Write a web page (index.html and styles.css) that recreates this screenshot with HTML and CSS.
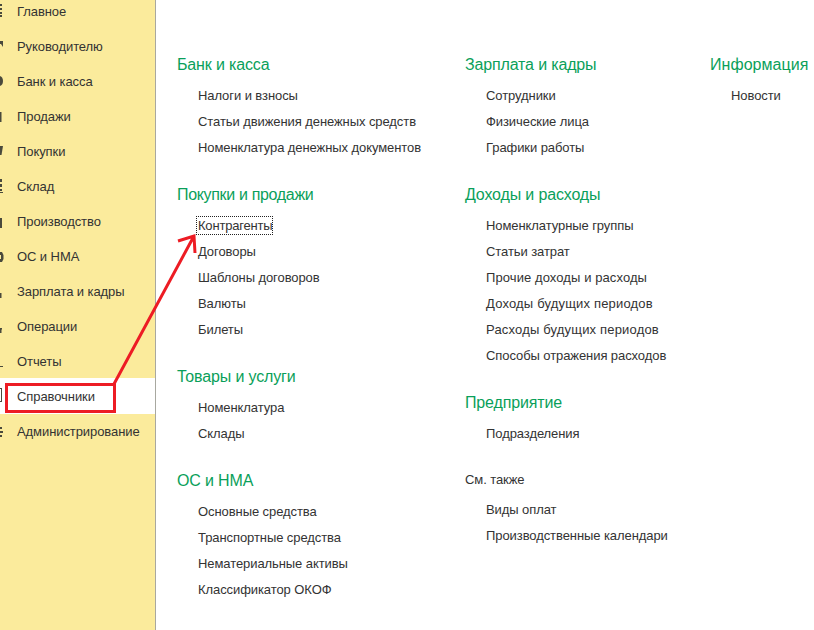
FILE: index.html
```html
<!DOCTYPE html>
<html lang="ru">
<head>
<meta charset="utf-8">
<title>Справочники</title>
<link rel="stylesheet" href="styles.css">
</head>
<body>
<div class="app">
  <nav class="side">
    <div class="item"><svg class="ic" width="4" height="35" viewBox="0 0 4 35"><path d="M0 10h2v2H0zM0 14h2v2H0zM0 18h2v2H0zM0 21h2v2H0z"/></svg>Главное</div>
    <div class="item"><svg class="ic" width="4" height="35" viewBox="0 0 4 35"><path d="M0 12h3v6L1 15H0z"/></svg>Руководителю</div>
    <div class="item"><svg class="ic" width="4" height="35" viewBox="0 0 4 35"><path d="M0 12q3 1 3 5t-3 5z"/></svg>Банк и касса</div>
    <div class="item"><svg class="ic" width="4" height="35" viewBox="0 0 4 35"><path d="M0 13h1.500v10H0z"/></svg>Продажи</div>
    <div class="item"><svg class="ic" width="4" height="35" viewBox="0 0 4 35"><path d="M0 12h3l-1.500 9H0z"/></svg>Покупки</div>
    <div class="item"><svg class="ic" width="4" height="35" viewBox="0 0 4 35"><path d="M0 10h2v3H0zM0 15h2v3H0zM0 20h2v2H0zM0 23h3v1H0z"/></svg>Склад</div>
    <div class="item"><svg class="ic" width="4" height="35" viewBox="0 0 4 35"><path d="M0 14h2v10H0z"/></svg>Производство</div>
    <div class="item"><svg class="ic" width="4" height="35" viewBox="0 0 4 35"><path fill-rule="evenodd" d="M0 13h2l1.500 3v4L2 23H0zM0 16v4h1v-4z"/></svg>ОС и НМА</div>
    <div class="item"><svg class="ic" width="4" height="35" viewBox="0 0 4 35"><path d="M0 19h1.500v5H0z"/></svg>Зарплата и кадры</div>
    <div class="item"><svg class="ic" width="4" height="35" viewBox="0 0 4 35"><path d="M0 19h2v1.500H1.500V24H0z"/></svg>Операции</div>
    <div class="item"><svg class="ic" width="4" height="35" viewBox="0 0 4 35"><path d="M0 22h3v1H0z"/></svg>Отчеты</div>
    <div class="item active"><svg class="ic" width="4" height="36" viewBox="0 0 4 36"><path d="M0 10h2v14H0v-1h1V11H0z"/></svg>Справочники</div>
    <div class="item"><svg class="ic" width="4" height="35" viewBox="0 0 4 35"><path d="M0 13h2v2H0zM0 17h3v2H0zM0 21h2v2H0z"/></svg>Администрирование</div>
  </nav>
  <main class="content">
    <div class="col col1">
      <section class="group"><h2>Банк и касса</h2><a>Налоги и взносы</a><a>Статьи движения денежных средств</a><a>Номенклатура денежных документов</a></section>
      <section class="group"><h2 class="tight">Покупки и продажи</h2><a><span class="focus">Контрагенты</span></a><a>Договоры</a><a>Шаблоны договоров</a><a>Валюты</a><a>Билеты</a></section>
      <section class="group"><h2>Товары и услуги</h2><a>Номенклатура</a><a>Склады</a></section>
      <section class="group"><h2>ОС и НМА</h2><a>Основные средства</a><a>Транспортные средства</a><a>Нематериальные активы</a><a>Классификатор ОКОФ</a></section>
    </div>
    <div class="col col2">
      <section class="group"><h2>Зарплата и кадры</h2><a>Сотрудники</a><a>Физические лица</a><a>Графики работы</a></section>
      <section class="group"><h2>Доходы и расходы</h2><a>Номенклатурные группы</a><a>Статьи затрат</a><a class="wider">Прочие доходы и расходы</a><a class="widest">Доходы будущих периодов</a><a class="widest">Расходы будущих периодов</a><a>Способы отражения расходов</a></section>
      <section class="group"><h2>Предприятие</h2><a>Подразделения</a></section>
      <section class="group"><h3>См. также</h3><a>Виды оплат</a><a>Производственные календари</a></section>
    </div>
    <div class="col col3">
      <section class="group"><h2 class="loose">Информация</h2><a>Новости</a></section>
    </div>
  </main>
  <svg class="marks" width="814" height="630" viewBox="0 0 814 630" aria-hidden="true">
    <rect x="6.500" y="384.500" width="108" height="27" fill="none" stroke="#ed1c24" stroke-width="3"/>
    <path d="M114 384 L194 236 M178 241 L194 236 L195 253" fill="none" stroke="#ed1c24" stroke-width="3"/>
  </svg>
</div>
</body>
</html>
```
FILE: styles.css
```css
html, body { margin: 0; padding: 0; background: #fff; }
body { width: 814px; height: 630px; overflow: hidden; font-family: "Liberation Sans", Arial, sans-serif; color: #333; }
.app { position: relative; display: flex; width: 814px; height: 630px; overflow: hidden; }
.side { width: 155px; height: 636px; margin-top: -6px; flex: none; background: #fbeb9c; border-right: 1px solid #a8a8a0; }
.item { height: 35px; line-height: 35px; padding-left: 17px; font-size: 13px; letter-spacing: -0.08px; white-space: nowrap; position: relative; }
.item.active { background: #fff; height: 36px; margin-top: -1px; line-height: 37px; }
.ic { position: absolute; left: 0; top: 0; fill: #4a4a3c; }
.content { flex: 1; display: flex; padding-top: 55px; }
.col { flex: none; }
.col1 { width: 288px; margin-left: 21px; }
.col2 { width: 245px; }
.group { margin-bottom: 24px; }
.group h2 { margin: 0 0 8px; font-size: 16px; font-weight: 400; line-height: 20px; letter-spacing: -0.15px; color: #0a9f5a; white-space: nowrap; }
.group h2.tight { letter-spacing: -0.33px; }
.group h2.loose { letter-spacing: 0.05px; }
.group h3 { margin: -1px 0 7px; font-size: 13px; font-weight: 400; line-height: 20px; letter-spacing: -0.08px; color: #333; }
.group a { display: flex; align-items: flex-start; height: 26px; line-height: 26px; padding-left: 21px; font-size: 13px; letter-spacing: -0.08px; white-space: nowrap; }
.group a.wider { letter-spacing: 0.09px; }
.group a.widest { letter-spacing: 0.18px; }
.focus { height: 19px; line-height: 20px; margin: 3px 0 0 -2px; padding: 0 1px 0 2px; outline: 1px dotted #222; outline-offset: -1px; letter-spacing: -0.2px; }
.marks { position: absolute; left: 0; top: 0; pointer-events: none; }
```
